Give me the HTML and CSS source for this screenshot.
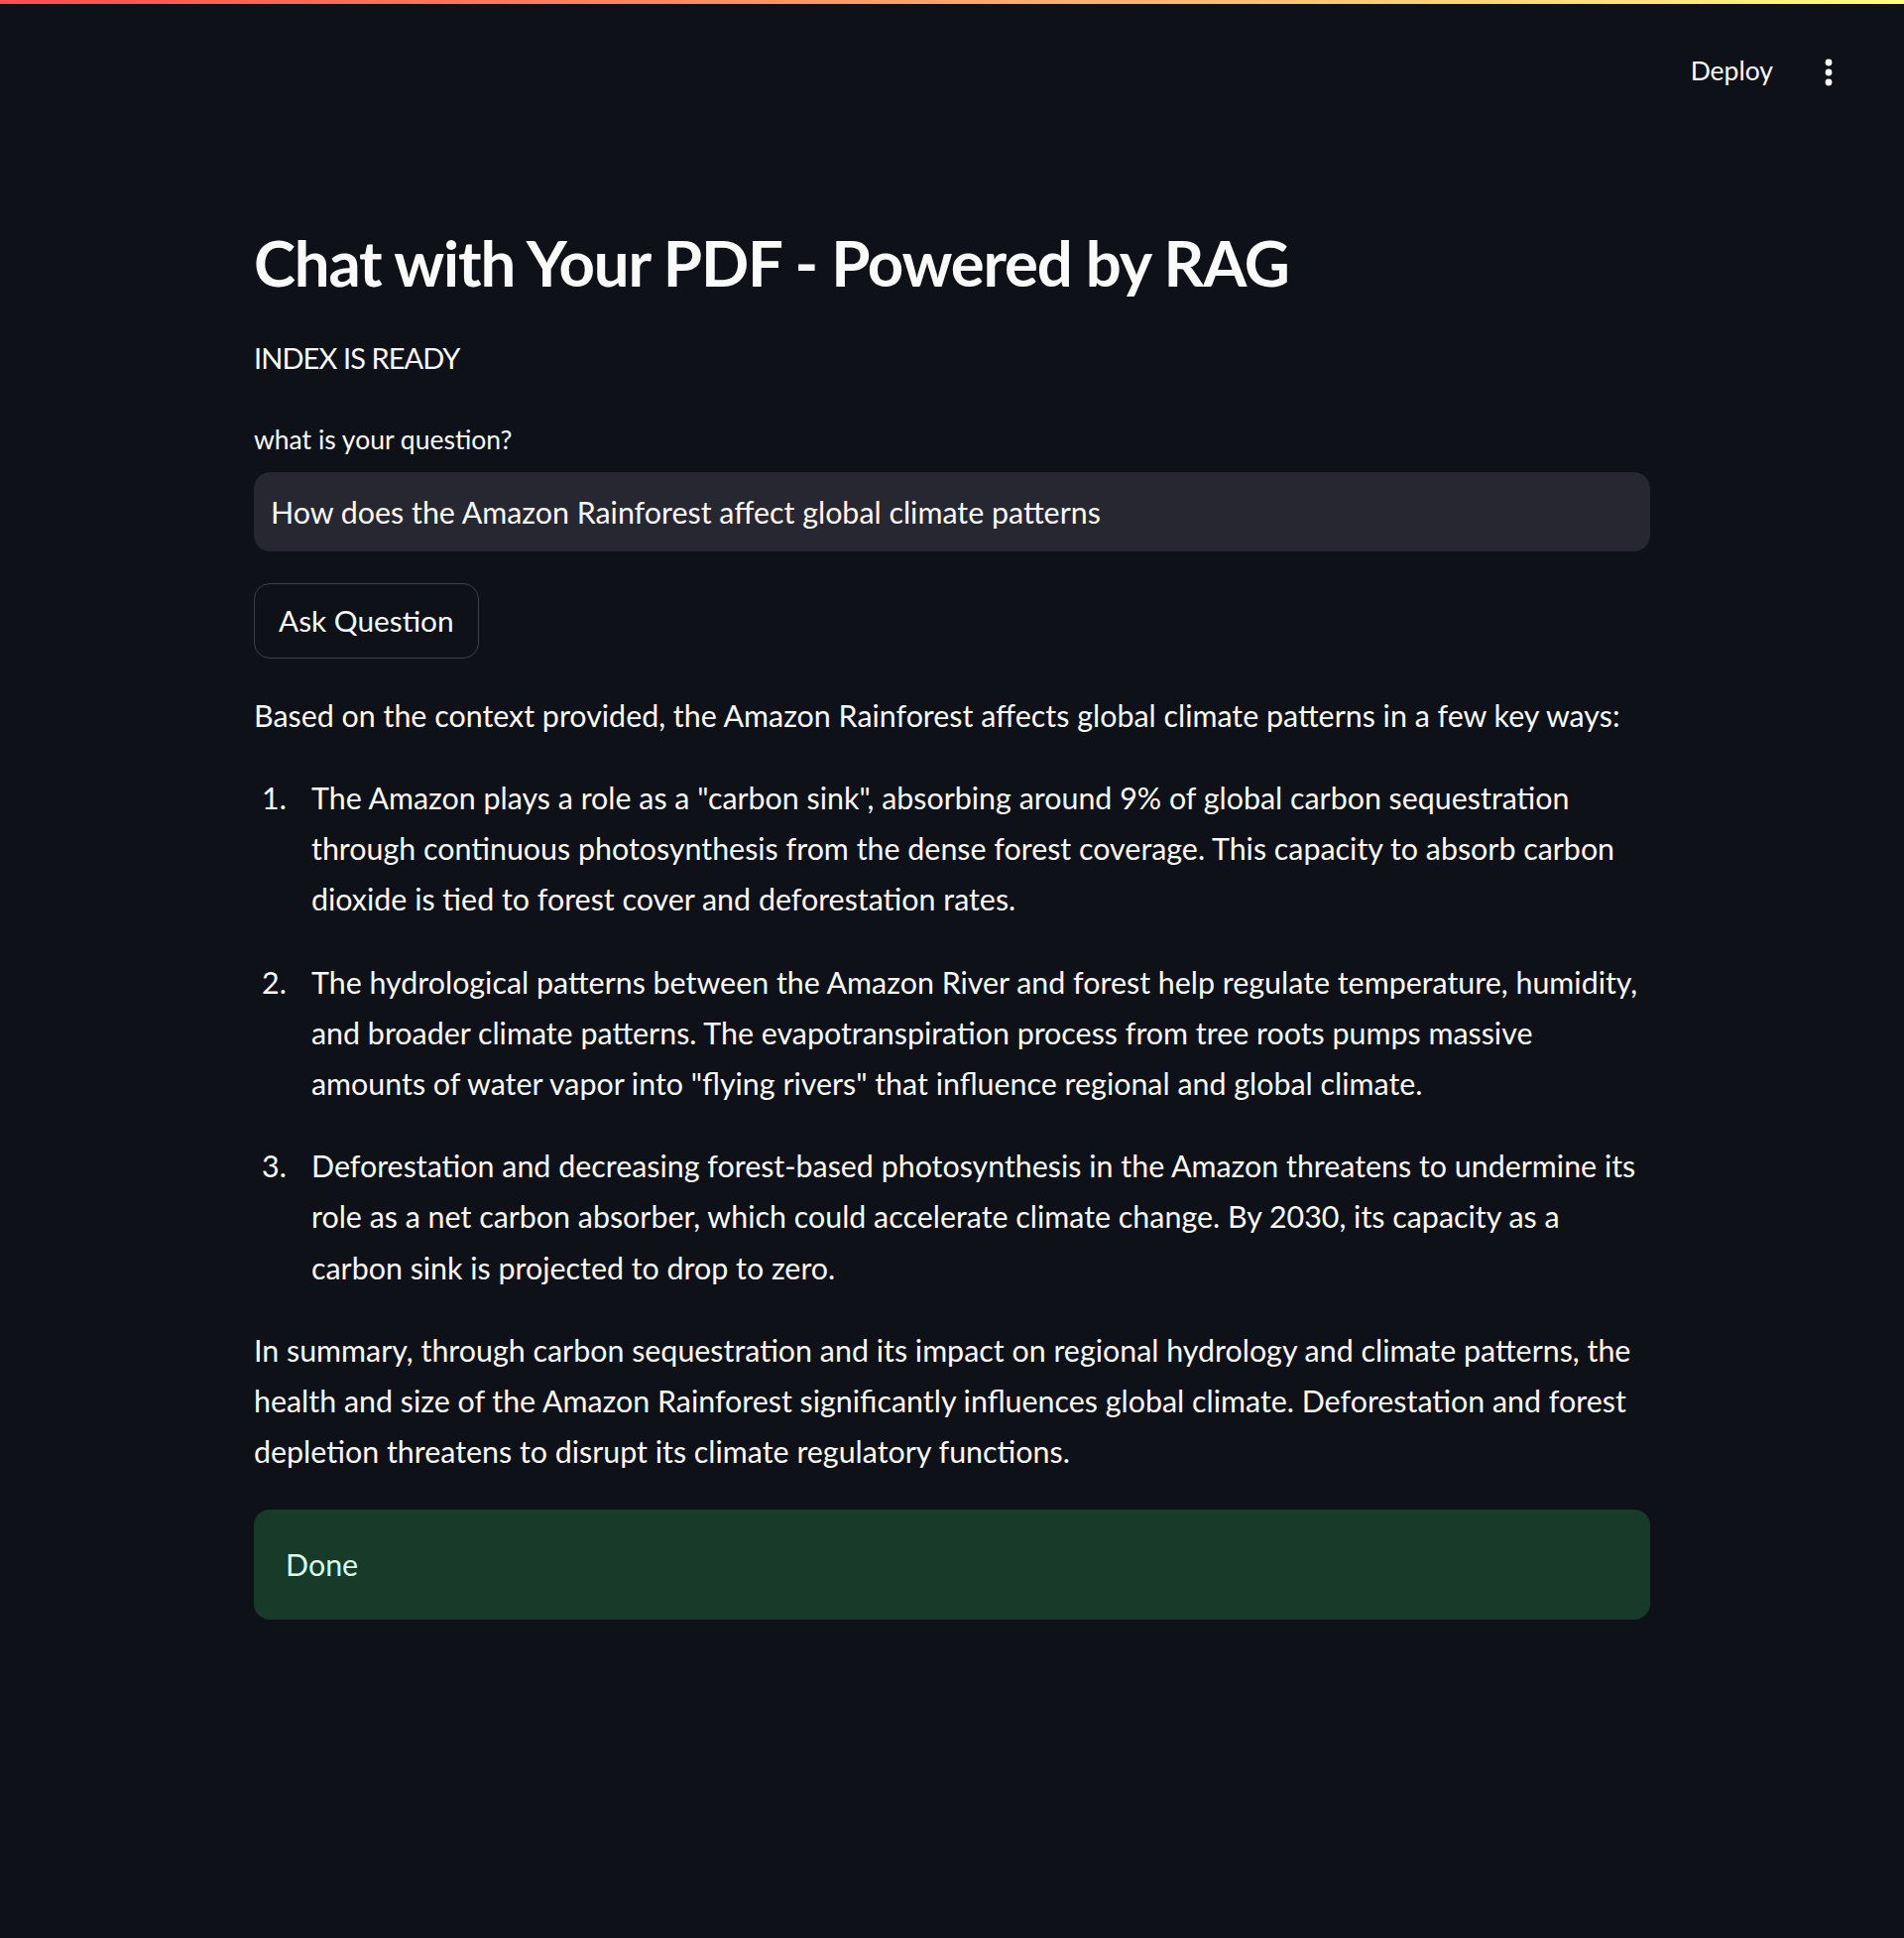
FILE: index.html
```html
<!DOCTYPE html>
<html lang="en">
<head>
<meta charset="utf-8">
<title>Chat with Your PDF</title>
<link rel="stylesheet" href="styles.css">
</head>
<body>
<div class="decoration"></div>
<header class="topbar">
  <button class="deploy">Deploy</button>
  <button class="kebab" aria-label="Main menu">
    <svg width="24" height="30" viewBox="0 0 24 30"><circle cx="12" cy="5" r="3.4" fill="#fafafa"/><circle cx="12" cy="15" r="3.4" fill="#fafafa"/><circle cx="12" cy="25" r="3.4" fill="#fafafa"/></svg>
  </button>
</header>
<main class="main">
  <h1 class="title">Chat with Your PDF - Powered by RAG</h1>
  <p class="status">INDEX IS READY</p>
  <label class="label" for="q">what is your question?</label>
  <input class="text-input" id="q" type="text" value="How does the Amazon Rainforest affect global climate patterns">
  <button class="ask">Ask Question</button>
  <div class="answer">
    <p>Based on the context provided, the Amazon Rainforest affects global climate patterns in a few key ways:</p>
    <ol>
      <li>The Amazon plays a role as a "carbon sink", absorbing around 9% of global carbon sequestration through continuous photosynthesis from the dense forest coverage. This capacity to absorb carbon dioxide is tied to forest cover and deforestation rates.</li>
      <li>The hydrological patterns between the Amazon River and forest help regulate temperature, humidity, and broader climate patterns. The evapotranspiration process from tree roots pumps massive amounts of water vapor into "flying rivers" that influence regional and global climate.</li>
      <li>Deforestation and decreasing forest-based photosynthesis in the Amazon threatens to undermine its role as a net carbon absorber, which could accelerate climate change. By 2030, its capacity as a carbon sink is projected to drop to zero.</li>
    </ol>
    <p>In summary, through carbon sequestration and its impact on regional hydrology and climate patterns, the health and size of the Amazon Rainforest significantly influences global climate. Deforestation and forest depletion threatens to disrupt its climate regulatory functions.</p>
  </div>
  <div class="alert-success">Done</div>
</main>
</body>
</html>
```
FILE: styles.css
```css
html, body {
  margin: 0;
  padding: 0;
}
body {
  background: #0e1117;
  color: #fafafa;
  font-family: "Lato", "Source Sans Pro", sans-serif;
  min-height: 1954px;
}
.decoration {
  height: 4px;
  background: linear-gradient(90deg, #ff4b4b, #fffd80);
}
.topbar {
  height: 136px;
  display: flex;
  align-items: center;
  justify-content: flex-end;
  padding-right: 64px;
  gap: 44px;
}
.deploy {
  background: transparent;
  border: none;
  color: #fafafa;
  font-family: "Lato", sans-serif;
  font-size: 26.5px;
  padding: 0;
  line-height: 1.2;
}
.kebab {
  background: transparent;
  border: none;
  padding: 0;
  display: flex;
  margin-top: 2px;
}
.main {
  width: 1408px;
  margin: 0 auto;
  padding-top: 87px;
  font-size: 30.4px;
  line-height: 51.2px;
}
.title {
  margin: 0;
  font-size: 63.5px;
  font-weight: 700;
  letter-spacing: -1.2px;
  line-height: 75.6px;
}
.status {
  margin: 32px 0 0;
  font-size: 29px;
  letter-spacing: -0.9px;
  line-height: 51.2px;
}
.label {
  display: block;
  margin-top: 36px;
  font-size: 26.5px;
  line-height: 42px;
}
.text-input {
  display: block;
  box-sizing: border-box;
  width: 100%;
  height: 80px;
  margin-top: 12px;
  padding: 0 16px;
  background: #262730;
  border: 1px solid #262730;
  border-radius: 16px;
  color: #fafafa;
  font-family: "Lato", sans-serif;
  font-size: 30.4px;
  outline: none;
}
.ask {
  display: block;
  box-sizing: border-box;
  height: 76px;
  margin-top: 32px;
  padding: 0 24px;
  background: transparent;
  border: 1px solid rgba(250, 250, 250, 0.2);
  border-radius: 16px;
  color: #fafafa;
  font-family: "Lato", sans-serif;
  font-size: 29.8px;
}
.answer {
  margin-top: 32px;
}
.answer p {
  margin: 0 0 32px;
}
.answer ol {
  list-style: none;
  counter-reset: item;
  margin: 0 0 32px;
  padding: 0;
  display: flex;
  flex-direction: column;
  gap: 32px;
}
.answer li {
  counter-increment: item;
  display: flex;
}
.answer li::before {
  content: counter(item) ".";
  flex: 0 0 50px;
  padding-left: 8px;
}
.alert-success {
  margin-top: 33px;
  padding: 29.5px 32px;
  background: #173a29;
  border-radius: 16px;
  color: #dffde9;
}
```
